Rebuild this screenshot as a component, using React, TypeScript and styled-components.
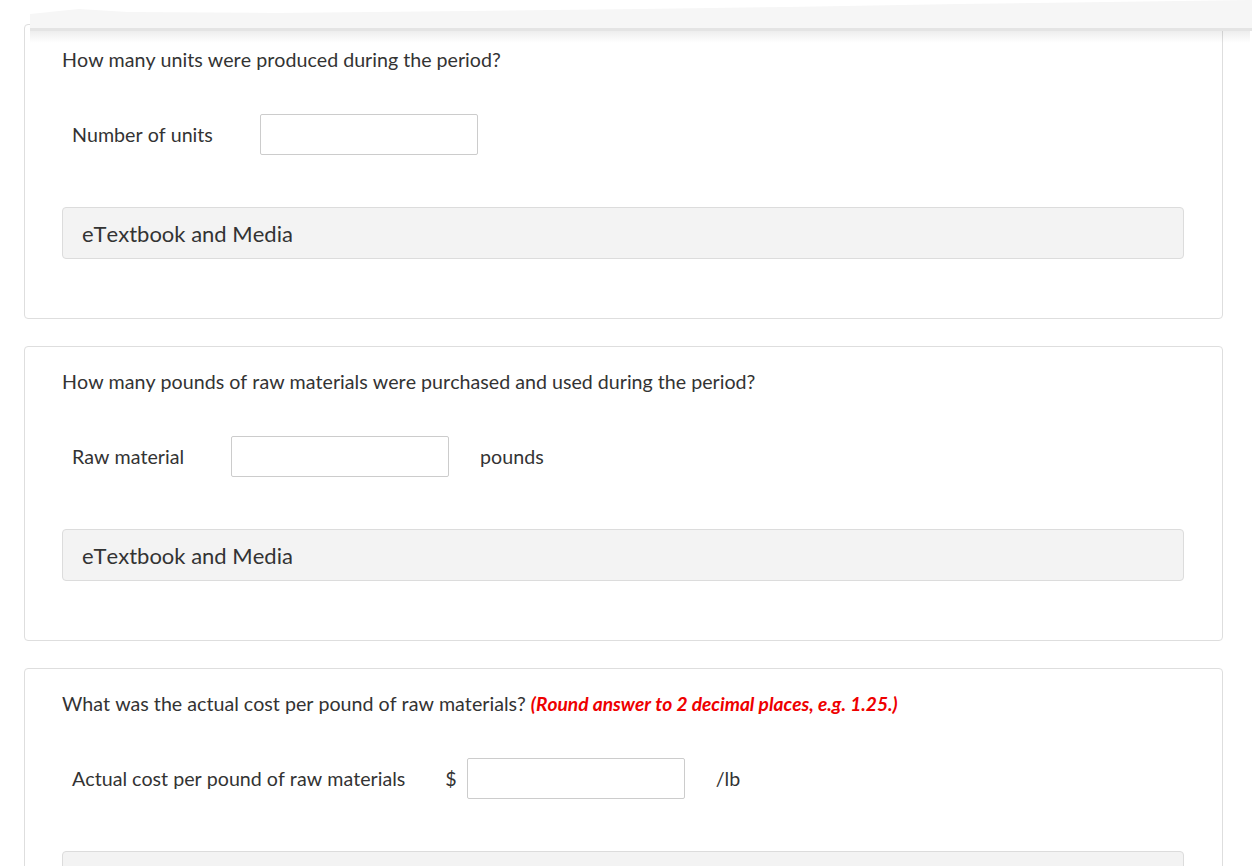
import React from 'react'
import styled, { createGlobalStyle } from 'styled-components'

const GlobalStyle = createGlobalStyle`
  html, body {
    margin: 0;
    padding: 0;
    background: #ffffff;
  }
  body {
    font-family: Lato, "Open Sans", "Liberation Sans", sans-serif;
    font-kerning: none;
    color: #333333;
  }
`

// torn paper edge from the screenshot crop, sits over the first card
const TornEdge = styled.div`
  position: absolute;
  top: 0;
  left: 30px;
  right: 8px;
  height: 31px;
  background: #f6f6f6;
  clip-path: polygon(0 14px, 4% 9px, 8% 12px, 20% 13px, 36% 11px, 50% 9px, 62% 7px, 76% 4px, 100% 0, 100% 100%, 0 100%);

  &::after {
    content: '';
    position: absolute;
    left: 0;
    right: 0;
    bottom: 0;
    height: 3px;
    background: #e4e4e4;
  }
`

const TornShadow = styled.div`
  position: absolute;
  top: 31px;
  left: 30px;
  right: 10px;
  height: 12px;
  background: linear-gradient(to bottom, rgba(0, 0, 0, 0.07), rgba(0, 0, 0, 0));
  pointer-events: none;
`

const Page = styled.div`
  position: relative;
  display: flex;
  flex-direction: column;
  gap: 27px;
  padding: 24px 37px 40px 24px;
`

const Card = styled.section`
  border: 1px solid #dedede;
  border-radius: 4px;
  background: #ffffff;
  padding: 24px 38px 59px 37px;
  display: flex;
  flex-direction: column;
`

const Question = styled.p`
  margin: 0 0 43px 0;
  font-size: 19.65px;
  line-height: 22px;
  color: #333333;
`

const Hint = styled.span`
  color: #ee0000;
  font-weight: 700;
  font-style: italic;
  font-size: 19.15px;
`

const AnswerRow = styled.div`
  display: flex;
  align-items: center;
  height: 41px;
  padding-left: 10px;
  margin-bottom: 52px;
`

const Label = styled.label<{ $gap: number }>`
  font-size: 19.65px;
  color: #333333;
  margin-right: ${p => p.$gap}px;
`

const Currency = styled.span`
  font-size: 19.65px;
  color: #333333;
  margin-right: 10px;
`

const Field = styled.input`
  box-sizing: border-box;
  width: 218px;
  height: 41px;
  border: 1px solid #cccccc;
  border-radius: 2px;
  background: #ffffff;
  font-family: inherit;
  font-size: 17px;
  padding: 0 8px;
  outline: none;
`

const Unit = styled.span`
  font-size: 19.65px;
  color: #333333;
  margin-left: 31px;
`

const MediaBar = styled.div`
  box-sizing: border-box;
  height: 52px;
  border: 1px solid #dcdcdc;
  border-radius: 4px;
  background: #f3f3f3;
  display: flex;
  align-items: center;
  padding-left: 19px;
  font-size: 22px;
  color: #333333;
`

const App = () => {
  return (
    <>
      <GlobalStyle />
      <Page>
        <TornEdge />
        <TornShadow />

        <Card>
          <Question>How many units were produced during the period?</Question>
          <AnswerRow>
            <Label $gap={47}>Number of units</Label>
            <Field type="text" />
          </AnswerRow>
          <MediaBar>eTextbook and Media</MediaBar>
        </Card>

        <Card>
          <Question>How many pounds of raw materials were purchased and used during the period?</Question>
          <AnswerRow>
            <Label $gap={47}>Raw material</Label>
            <Field type="text" />
            <Unit>pounds</Unit>
          </AnswerRow>
          <MediaBar>eTextbook and Media</MediaBar>
        </Card>

        <Card>
          <Question>
            What was the actual cost per pound of raw materials?{' '}
            <Hint>(Round answer to 2 decimal places, e.g. 1.25.)</Hint>
          </Question>
          <AnswerRow>
            <Label $gap={40}>Actual cost per pound of raw materials</Label>
            <Currency>$</Currency>
            <Field type="text" />
            <Unit>/lb</Unit>
          </AnswerRow>
          <MediaBar>eTextbook and Media</MediaBar>
        </Card>
      </Page>
    </>
  )
}

export default App
